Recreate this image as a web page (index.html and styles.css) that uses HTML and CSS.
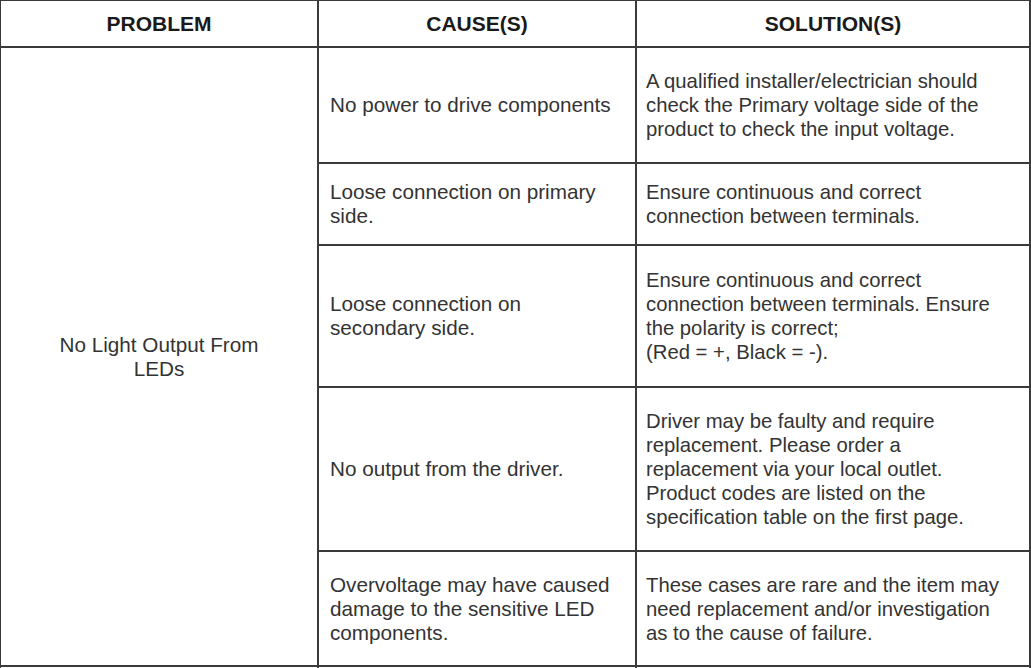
FILE: index.html
```html
<!DOCTYPE html>
<html>
<head>
<meta charset="utf-8">
<link rel="stylesheet" href="styles.css">
</head>
<body>
<table class="grid">
  <colgroup>
    <col class="c1"><col class="c2"><col class="c3">
  </colgroup>
  <thead>
    <tr class="head">
      <th>PROBLEM</th>
      <th>CAUSE(S)</th>
      <th>SOLUTION(S)</th>
    </tr>
  </thead>
  <tbody>
    <tr class="r1">
      <td class="problem" rowspan="5">No Light Output From<br>LEDs</td>
      <td>No power to drive components</td>
      <td class="sol">A qualified installer/electrician should<br>check the Primary voltage side of the<br>product to check the input voltage.</td>
    </tr>
    <tr class="r2">
      <td>Loose connection on primary<br>side.</td>
      <td class="sol">Ensure continuous and correct<br>connection between terminals.</td>
    </tr>
    <tr class="r3">
      <td>Loose connection on<br>secondary side.</td>
      <td class="sol">Ensure continuous and correct<br>connection between terminals. Ensure<br>the polarity is correct;<br>(Red = +, Black = -).</td>
    </tr>
    <tr class="r4">
      <td>No output from the driver.</td>
      <td class="sol">Driver may be faulty and require<br>replacement. Please order a<br>replacement via your local outlet.<br>Product codes are listed on the<br>specification table on the first page.</td>
    </tr>
    <tr class="r5">
      <td>Overvoltage may have caused<br>damage to the sensitive LED<br>components.</td>
      <td class="sol">These cases are rare and the item may<br>need replacement and/or investigation<br>as to the cause of failure.</td>
    </tr>
    <tr class="r6">
      <td></td><td></td><td></td>
    </tr>
  </tbody>
</table>
</body>
</html>
```
FILE: styles.css
```css
html, body {
  margin: 0;
  padding: 0;
  background: #fff;
  overflow: hidden;
  height: 668px;
}
.grid {
  border-collapse: collapse;
  table-layout: fixed;
  width: 1030px;
  margin: -1px 0 0 -1px;
  font-family: "Liberation Sans", Arial, sans-serif;
  font-size: 20.7px;
  line-height: 24px;
  color: #333;
}
.c1 { width: 318px; }
.c2 { width: 318px; }
.c3 { width: 394px; }
.grid th, .grid td {
  border: 2px solid #3a3a3a;
  vertical-align: middle;
  text-align: left;
  padding: 0 9px 0 11px;
  white-space: nowrap;
}
.grid td.sol {
  padding-left: 9px;
  font-size: 20.3px;
}
.grid th {
  font-weight: bold;
  font-size: 21px;
  text-align: center;
  color: #1a1a1a;
  height: 45px;
  padding: 0;
}
.grid td.problem {
  text-align: center;
  padding: 0;
}
.r1 td { height: 114px; }
.r2 td { height: 80px; }
.r3 td { height: 140px; }
.r4 td { height: 162px; }
.r5 td { height: 113px; }
.r6 td { height: 40px; }
```
